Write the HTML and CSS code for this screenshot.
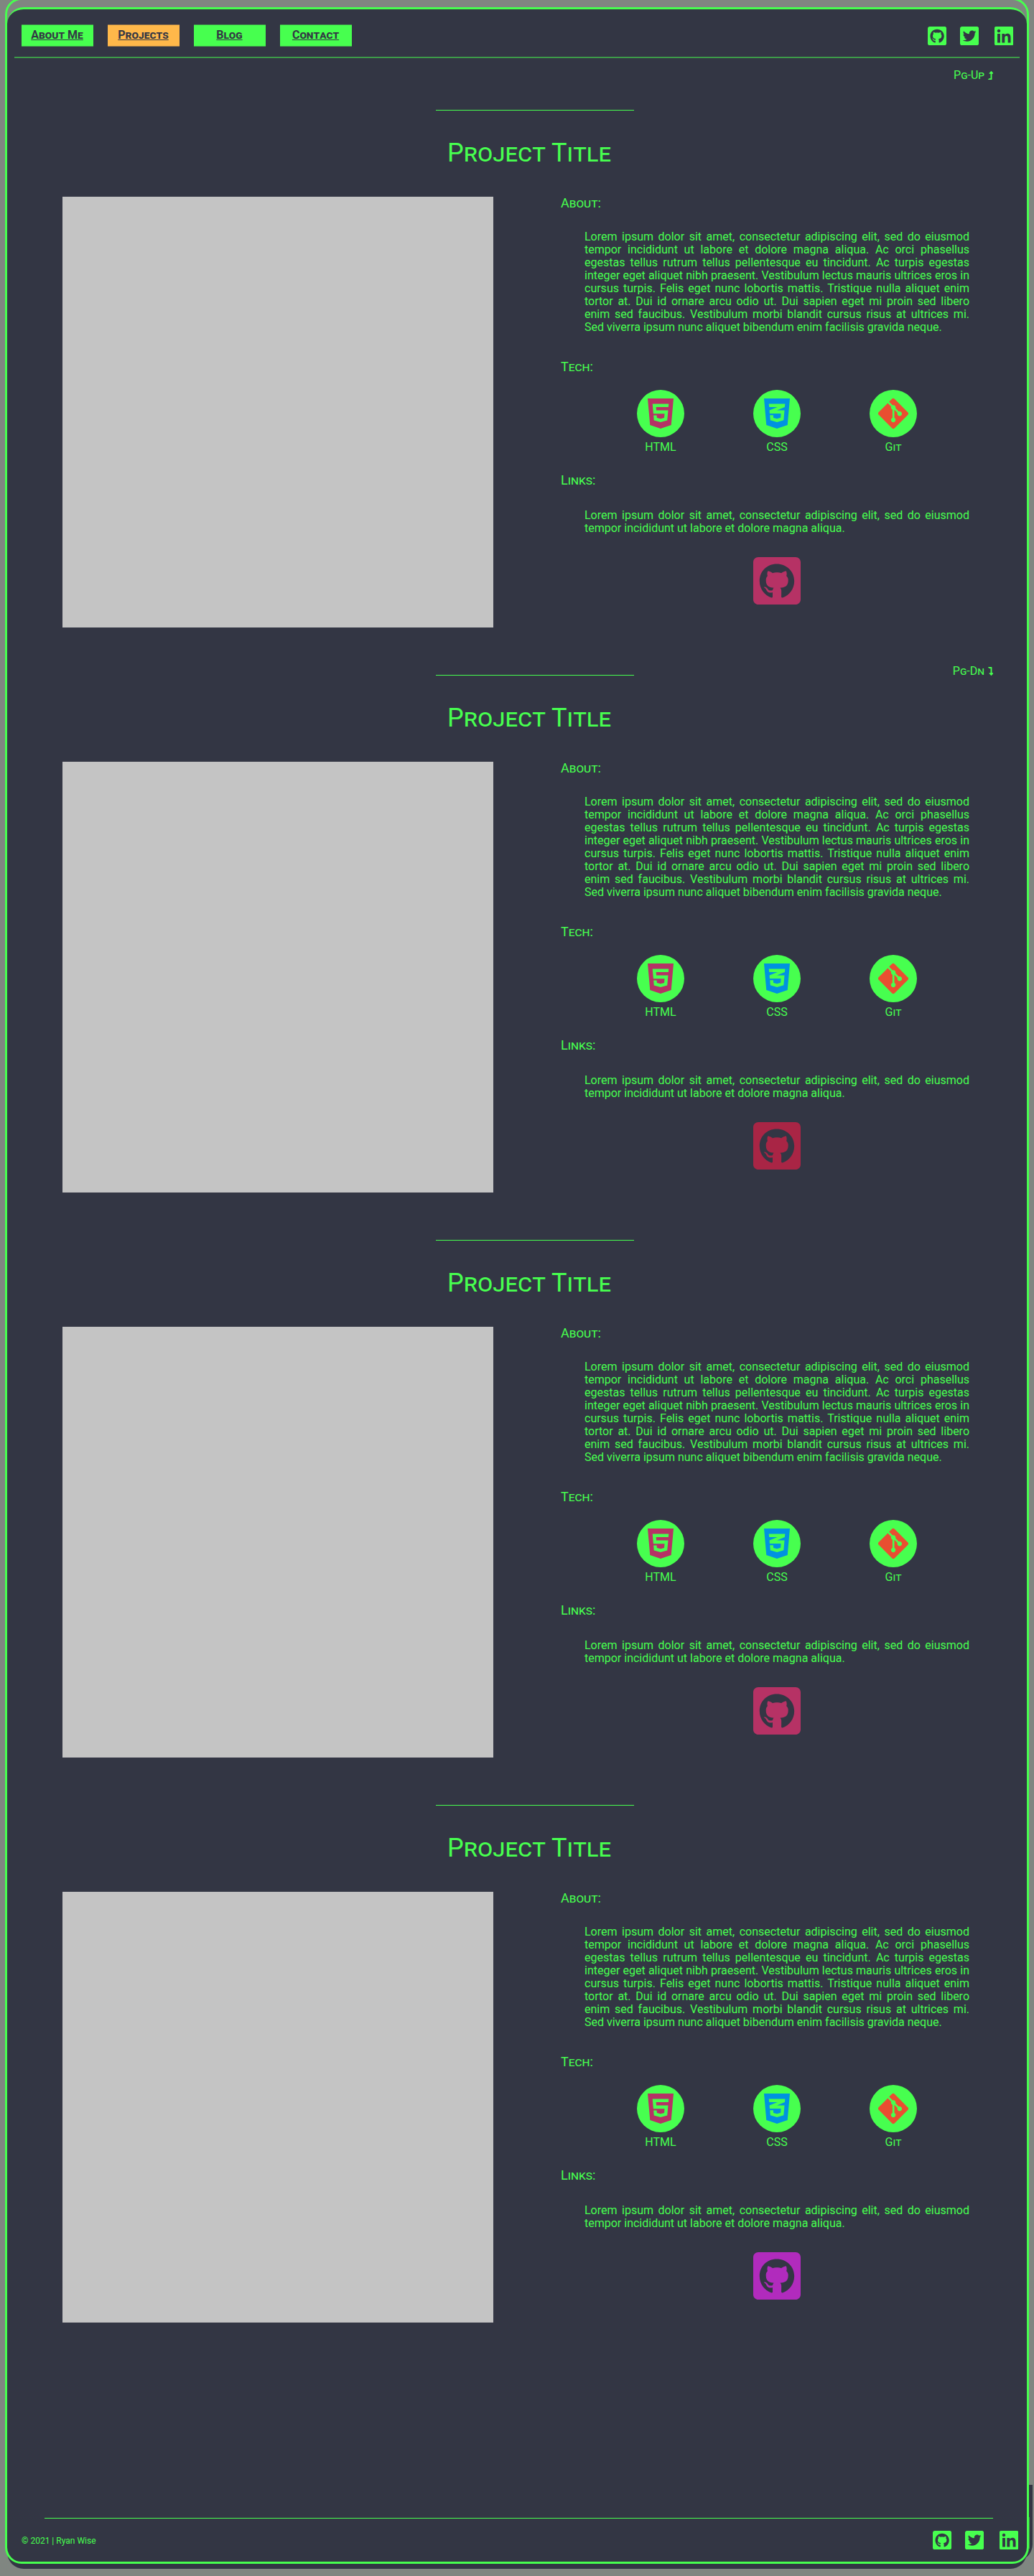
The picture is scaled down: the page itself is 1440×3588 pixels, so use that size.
FILE: index.html
```
<!DOCTYPE html>
<html lang="en">
<head>
<meta charset="utf-8">
<title>Projects | Ryan Wise</title>
<link rel="stylesheet" href="styles.css">
</head>
<body>
<svg class="sprite" aria-hidden="true">
<symbol id="github" viewBox="0 32 448 448"><path d="M400 32H48C21.500 32 0 53.500 0 80v352c0 26.500 21.500 48 48 48h352c26.500 0 48-21.500 48-48V80c0-26.500-21.500-48-48-48zM277.300 415.700c-8.400 1.500-11.500-3.700-11.500-8 0-5.400.2-33 .2-55.300 0-15.600-5.200-25.500-11.300-30.700 37-4.100 76-9.200 76-73.100 0-18.200-6.500-27.300-17.100-39 1.700-4.300 7.400-22-1.700-45-13.900-4.300-45.700 17.900-45.700 17.900-13.200-3.700-27.500-5.600-41.600-5.600-14.100 0-28.400 1.900-41.600 5.600 0 0-31.800-22.200-45.700-17.900-9.100 22.900-3.500 40.600-1.700 45-10.600 11.700-15.600 20.800-15.600 39 0 63.600 37.300 69 74.300 73.100-4.800 4.300-9.100 11.700-10.600 22.300-9.500 4.300-33.800 11.700-48.300-13.900-9.100-15.800-25.500-17.100-25.500-17.100-16.200-.2-1.100 10.200-1.100 10.200 10.800 5 18.400 24.200 18.400 24.200 9.700 29.700 56.100 19.700 56.100 19.700 0 13.900.2 36.500.2 40.600 0 4.300-3 9.500-11.500 8-66-22.100-112.200-84.900-112.200-158.300 0-91.800 70.200-161.500 162-161.500S388 165.600 388 257.400c.1 73.400-44.700 136.300-110.700 158.300z"/></symbol>
<symbol id="twitter" viewBox="0 32 448 448"><path d="M400 32H48C21.500 32 0 53.500 0 80v352c0 26.500 21.500 48 48 48h352c26.500 0 48-21.500 48-48V80c0-26.500-21.500-48-48-48zm-48.900 158.800c.2 2.800.2 5.700.2 8.500 0 86.700-66 186.600-186.600 186.600-37.200 0-71.700-10.800-100.700-29.400 5.300.6 10.400.8 15.800.8 30.700 0 58.900-10.400 81.400-28-28.800-.6-53-19.500-61.300-45.500 10.100 1.500 19.200 1.500 29.600-1.200-30-6.100-52.500-32.500-52.500-64.400v-.8c8.700 4.900 18.900 7.900 29.600 8.300a65.447 65.447 0 0 1-29.200-54.600c0-12.200 3.200-23.400 8.900-33.100 32.300 39.800 80.800 65.800 135.200 68.600-9.300-44.500 24-80.600 64-80.600 18.900 0 35.900 7.900 47.900 20.700 14.800-2.800 29-8.300 41.600-15.800-4.900 15.200-15.200 28-28.800 36.100 13.200-1.400 26-5.100 37.800-10.200-8.900 13.100-20.100 24.700-32.900 34z"/></symbol>
<symbol id="linkedin" viewBox="0 32 448 448"><path d="M416 32H31.900C14.300 32 0 46.500 0 64.300v383.400C0 465.500 14.300 480 31.900 480H416c17.600 0 32-14.500 32-32.300V64.300c0-17.800-14.400-32.300-32-32.300zM135.400 416H69V202.200h66.500V416zm-33.200-243c-21.300 0-38.500-17.300-38.500-38.500S80.900 96 102.200 96c21.200 0 38.500 17.300 38.500 38.500 0 21.300-17.200 38.500-38.500 38.500zm282.100 243h-66.400V312c0-24.800-.5-56.700-34.500-56.700-34.600 0-39.900 27-39.900 54.900V416h-66.400V202.200h63.700v29.200h.9c8.900-16.800 30.600-34.500 62.900-34.500 67.200 0 79.700 44.300 79.700 101.900V416z"/></symbol>
<symbol id="html5" viewBox="0 0 384 512"><path d="M0 32l34.900 395.800L191.500 480l157.600-52.200L384 32H0zm308.200 127.900H124.400l4.100 49.400h175.600l-13.600 148.400-97.900 27v.3h-1.100l-98.700-27.300-6-75.800h47.700L138 320l53.500 14.500 53.700-14.500 6-62.200H84.300L71.500 112.200h241.100l-4.400 47.700z"/></symbol>
<symbol id="css3" viewBox="0 0 384 512"><path d="M0 32l34.900 395.800L192 480l157.100-52.200L384 32H0zm313.100 80l-4.800 47.300L193 208.600l-.3.1h111.500l-12.800 146.600-98.200 28.700-98.800-29.200-6.400-73.900h48.900l3.200 38.300 52.600 13.300 54.700-15.400 3.700-61.600-166.300-.5v-.1l-.2.1-3.600-46.300L193.100 162l6.500-2.700H76.700L70.900 112h242.200z"/></symbol>
<symbol id="git" viewBox="0 0 448 512"><path d="M439.550 236.050L244 40.450a28.870 28.870 0 0 0-40.810 0l-40.660 40.630 51.520 51.520c27.060-9.140 52.680 16.770 43.390 43.680l49.660 49.660c34.230-11.800 61.180 31 35.470 56.690-26.490 26.490-70.210-2.870-56-37.340L240.220 199v121.850c25.300 12.540 22.260 41.850 9.080 55a34.340 34.340 0 0 1-48.550 0c-17.570-17.600-11.070-46.910 11.250-56v-123c-20.800-8.510-24.600-30.740-18.640-45L142.570 101 8.450 235.140a28.860 28.860 0 0 0 0 40.810l195.610 195.600a28.860 28.860 0 0 0 40.800 0l194.690-194.690a28.860 28.860 0 0 0 0-40.810z"/></symbol>
<symbol id="level-up" viewBox="0 0 320 512"><path d="M313.553 119.669L209.587 7.666c-9.485-10.214-25.676-10.229-35.174 0L70.438 119.669C56.232 134.969 67.062 160 88.025 160H152v272H68.024a11.996 11.996 0 0 0-8.485 3.515l-56 56C-4.021 499.074 1.333 512 12.024 512H208c13.255 0 24-10.745 24-24V160h63.966c20.878 0 31.851-24.969 17.587-40.331z"/></symbol>
<symbol id="level-down" viewBox="0 0 320 512"><path d="M313.553 392.331L209.587 504.334c-9.485 10.214-25.676 10.229-35.174 0L70.438 392.331C56.232 377.031 67.062 352 88.025 352H152V80H68.024a11.996 11.996 0 0 1-8.485-3.515l-56-56C-4.021 12.926 1.333 0 12.024 0H208c13.255 0 24 10.745 24 24v328h63.966c20.878 0 31.851 24.969 17.587 40.331z"/></symbol>
</svg>
<div class="corner"></div>
<div class="panel">
<header class="topbar">
<nav class="nav">
<a class="tab">About Me</a>
<a class="tab tab-active">Projects</a>
<a class="tab">Blog</a>
<a class="tab">Contact</a>
</nav>
<div class="social">
<svg><use href="#github"/></svg>
<svg><use href="#twitter"/></svg>
<svg><use href="#linkedin"/></svg>
</div>
</header>
<div class="pager">Pg-Up <svg><use href="#level-up"/></svg></div>
<main>
<article class="project">
<hr class="rule">
<h2 class="title">Project Title</h2>
<div class="content">
<div class="shot"></div>
<div class="details">
<h3 class="label">About:</h3>
<p class="text">Lorem ipsum dolor sit amet, consectetur adipiscing elit, sed do eiusmod tempor incididunt ut labore et dolore magna aliqua. Ac orci phasellus egestas tellus rutrum tellus pellentesque eu tincidunt. Ac turpis egestas integer eget aliquet nibh praesent. Vestibulum lectus mauris ultrices eros in cursus turpis. Felis eget nunc lobortis mattis. Tristique nulla aliquet enim tortor at. Dui id ornare arcu odio ut. Dui sapien eget mi proin sed libero enim sed faucibus. Vestibulum morbi blandit cursus risus at ultrices mi. Sed viverra ipsum nunc aliquet bibendum enim facilisis gravida neque.</p>
<h3 class="label">Tech:</h3>
<div class="techs">
<div class="tech"><span class="disc html"><svg><use href="#html5"/></svg></span>HTML</div>
<div class="tech"><span class="disc css"><svg><use href="#css3"/></svg></span>CSS</div>
<div class="tech"><span class="disc git"><svg><use href="#git"/></svg></span>Git</div>
</div>
<h3 class="label">Links:</h3>
<p class="text text-links">Lorem ipsum dolor sit amet, consectetur adipiscing elit, sed do eiusmod tempor incididunt ut labore et dolore magna aliqua.</p>
<svg class="repo pink"><use href="#github"/></svg>
</div>
</div>
</article>
<div class="pager pager-down">Pg-Dn <svg><use href="#level-down"/></svg></div>
<article class="project">
<hr class="rule">
<h2 class="title">Project Title</h2>
<div class="content">
<div class="shot"></div>
<div class="details">
<h3 class="label">About:</h3>
<p class="text">Lorem ipsum dolor sit amet, consectetur adipiscing elit, sed do eiusmod tempor incididunt ut labore et dolore magna aliqua. Ac orci phasellus egestas tellus rutrum tellus pellentesque eu tincidunt. Ac turpis egestas integer eget aliquet nibh praesent. Vestibulum lectus mauris ultrices eros in cursus turpis. Felis eget nunc lobortis mattis. Tristique nulla aliquet enim tortor at. Dui id ornare arcu odio ut. Dui sapien eget mi proin sed libero enim sed faucibus. Vestibulum morbi blandit cursus risus at ultrices mi. Sed viverra ipsum nunc aliquet bibendum enim facilisis gravida neque.</p>
<h3 class="label">Tech:</h3>
<div class="techs">
<div class="tech"><span class="disc html"><svg><use href="#html5"/></svg></span>HTML</div>
<div class="tech"><span class="disc css"><svg><use href="#css3"/></svg></span>CSS</div>
<div class="tech"><span class="disc git"><svg><use href="#git"/></svg></span>Git</div>
</div>
<h3 class="label">Links:</h3>
<p class="text text-links">Lorem ipsum dolor sit amet, consectetur adipiscing elit, sed do eiusmod tempor incididunt ut labore et dolore magna aliqua.</p>
<svg class="repo crimson"><use href="#github"/></svg>
</div>
</div>
</article>
<article class="project spaced">
<hr class="rule">
<h2 class="title">Project Title</h2>
<div class="content">
<div class="shot"></div>
<div class="details">
<h3 class="label">About:</h3>
<p class="text">Lorem ipsum dolor sit amet, consectetur adipiscing elit, sed do eiusmod tempor incididunt ut labore et dolore magna aliqua. Ac orci phasellus egestas tellus rutrum tellus pellentesque eu tincidunt. Ac turpis egestas integer eget aliquet nibh praesent. Vestibulum lectus mauris ultrices eros in cursus turpis. Felis eget nunc lobortis mattis. Tristique nulla aliquet enim tortor at. Dui id ornare arcu odio ut. Dui sapien eget mi proin sed libero enim sed faucibus. Vestibulum morbi blandit cursus risus at ultrices mi. Sed viverra ipsum nunc aliquet bibendum enim facilisis gravida neque.</p>
<h3 class="label">Tech:</h3>
<div class="techs">
<div class="tech"><span class="disc html"><svg><use href="#html5"/></svg></span>HTML</div>
<div class="tech"><span class="disc css"><svg><use href="#css3"/></svg></span>CSS</div>
<div class="tech"><span class="disc git"><svg><use href="#git"/></svg></span>Git</div>
</div>
<h3 class="label">Links:</h3>
<p class="text text-links">Lorem ipsum dolor sit amet, consectetur adipiscing elit, sed do eiusmod tempor incididunt ut labore et dolore magna aliqua.</p>
<svg class="repo pink"><use href="#github"/></svg>
</div>
</div>
</article>
<article class="project spaced">
<hr class="rule">
<h2 class="title">Project Title</h2>
<div class="content">
<div class="shot"></div>
<div class="details">
<h3 class="label">About:</h3>
<p class="text">Lorem ipsum dolor sit amet, consectetur adipiscing elit, sed do eiusmod tempor incididunt ut labore et dolore magna aliqua. Ac orci phasellus egestas tellus rutrum tellus pellentesque eu tincidunt. Ac turpis egestas integer eget aliquet nibh praesent. Vestibulum lectus mauris ultrices eros in cursus turpis. Felis eget nunc lobortis mattis. Tristique nulla aliquet enim tortor at. Dui id ornare arcu odio ut. Dui sapien eget mi proin sed libero enim sed faucibus. Vestibulum morbi blandit cursus risus at ultrices mi. Sed viverra ipsum nunc aliquet bibendum enim facilisis gravida neque.</p>
<h3 class="label">Tech:</h3>
<div class="techs">
<div class="tech"><span class="disc html"><svg><use href="#html5"/></svg></span>HTML</div>
<div class="tech"><span class="disc css"><svg><use href="#css3"/></svg></span>CSS</div>
<div class="tech"><span class="disc git"><svg><use href="#git"/></svg></span>Git</div>
</div>
<h3 class="label">Links:</h3>
<p class="text text-links">Lorem ipsum dolor sit amet, consectetur adipiscing elit, sed do eiusmod tempor incididunt ut labore et dolore magna aliqua.</p>
<svg class="repo purple"><use href="#github"/></svg>
</div>
</div>
</article>
</main>
<footer class="footer">
<small class="copy">© 2021 | Ryan Wise</small>
<div class="social">
<svg><use href="#github"/></svg>
<svg><use href="#twitter"/></svg>
<svg><use href="#linkedin"/></svg>
</div>
</footer>
</div>
<div class="frame"></div>
</body>
</html>
```
FILE: styles.css
```
:root {
  --green: #47ff4f;
  --dark: #333644;
}

* { box-sizing: border-box; }

body {
  position: relative;
  margin: 0;
  height: 3588px;
  padding: 10px 10px 0;
  overflow: hidden;
  background: #808681;
  color: var(--green);
  font: 16px/18px Roboto, sans-serif;
}

svg { display: block; fill: currentColor; }
.sprite { position: absolute; width: 0; height: 0; }

/* Decorative outline, offset from the panel */
.frame {
  position: absolute;
  top: -3px;
  left: 7px;
  width: 1426px;
  height: 3574px;
  border: 3px solid var(--green);
  border-radius: 23px;
  pointer-events: none;
}

.corner {
  position: absolute;
  top: 3461px;
  right: 2px;
  width: 30px;
  height: 106px;
  border-radius: 0 0 23px 0;
  background: linear-gradient(#3d9b49, #3d9b49) 25px 45px / 1px 44px no-repeat var(--dark);
}

.panel {
  position: relative;
  display: flex;
  flex-direction: column;
  height: 3568px;
  border-top: 3px solid var(--green);
  border-radius: 23px;
  background: var(--dark);
}

.topbar {
  display: flex;
  justify-content: space-between;
  height: 68px;
  margin: 0 10px;
  padding: 21px 8.75px 0 10px;
  border-bottom: 2px solid #3d9b49;
}

.nav { display: flex; gap: 20px; }

.tab {
  width: 100px;
  height: 31px;
  padding-right: 1px;
  border: solid #3d9b49;
  border-width: 1px 0;
  background: var(--green);
  color: var(--dark);
  font-weight: 700;
  font-variant: small-caps;
  line-height: 27px;
  text-align: center;
  text-decoration: underline;
  text-decoration-thickness: 1px;
}

.tab-active { background: #ffb84a; border-color: #997647; }

.social { display: flex; gap: 18.75px; padding-top: 3px; }
.social svg { width: 26.25px; height: 26.25px; }
.social svg:last-child { margin-left: 3px; }

.pager {
  display: flex;
  align-items: center;
  justify-content: flex-end;
  gap: 4.500px;
  height: 19px;
  margin: 14px 47px 39px 0;
  font-variant: small-caps;
}

.pager svg { width: 7.5px; height: 12px; }
.pager-down { margin: 51px 47px -4px 0; }

.spaced { margin-top: 66px; }

.rule {
  width: 276px;
  height: 1px;
  margin: 0 0 0 597px;
  border: 0;
  background: var(--green);
}

.title {
  margin: 38px 0 40px 613px;
  font-size: 36px;
  font-weight: 400;
  font-variant: small-caps;
  line-height: 42px;
}

.content { display: flex; height: 600px; padding-left: 77px; }
.shot { width: 600px; height: 600px; background: #c4c4c4; }
.details { width: 569px; margin: -2px 0 0 94px; }

.label {
  margin: 0;
  font-size: 18px;
  font-weight: 400;
  font-variant: small-caps;
  line-height: 21px;
}

.text { margin: 28px 0 35px 33px; text-align: justify; }
.text-links { margin: 30px 0 31px 33px; }

.techs {
  display: flex;
  justify-content: space-between;
  width: 390px;
  margin: 22px 0 26px 106px;
}

.tech {
  width: 66px;
  font-variant: small-caps;
  line-height: 19px;
  text-align: center;
}

.disc {
  display: flex;
  align-items: center;
  justify-content: center;
  width: 66px;
  height: 66px;
  margin-bottom: 4px;
  border-radius: 50%;
  background: var(--green);
}

.disc svg { width: 36px; height: 48px; }
.html { color: #b63265; }
.css { color: #0092e0; }
.git { color: #e94e31; }
.git svg { width: 42px; }

.repo { width: 66px; height: 66px; margin-left: 268px; }
.pink { color: #b63265; }
.crimson { color: #a92545; }
.purple { color: #b12bbd; }

.footer {
  display: flex;
  justify-content: space-between;
  height: 71px;
  margin: auto 0 0;
  padding: 18px 11.75px 0 20px;
  background: linear-gradient(var(--green), var(--green)) 52px 0 / 1321px 1px no-repeat;
}

.footer .social { padding-top: 0; }
.copy { padding-top: 7px; font-size: 12px; line-height: 14px; }
```
